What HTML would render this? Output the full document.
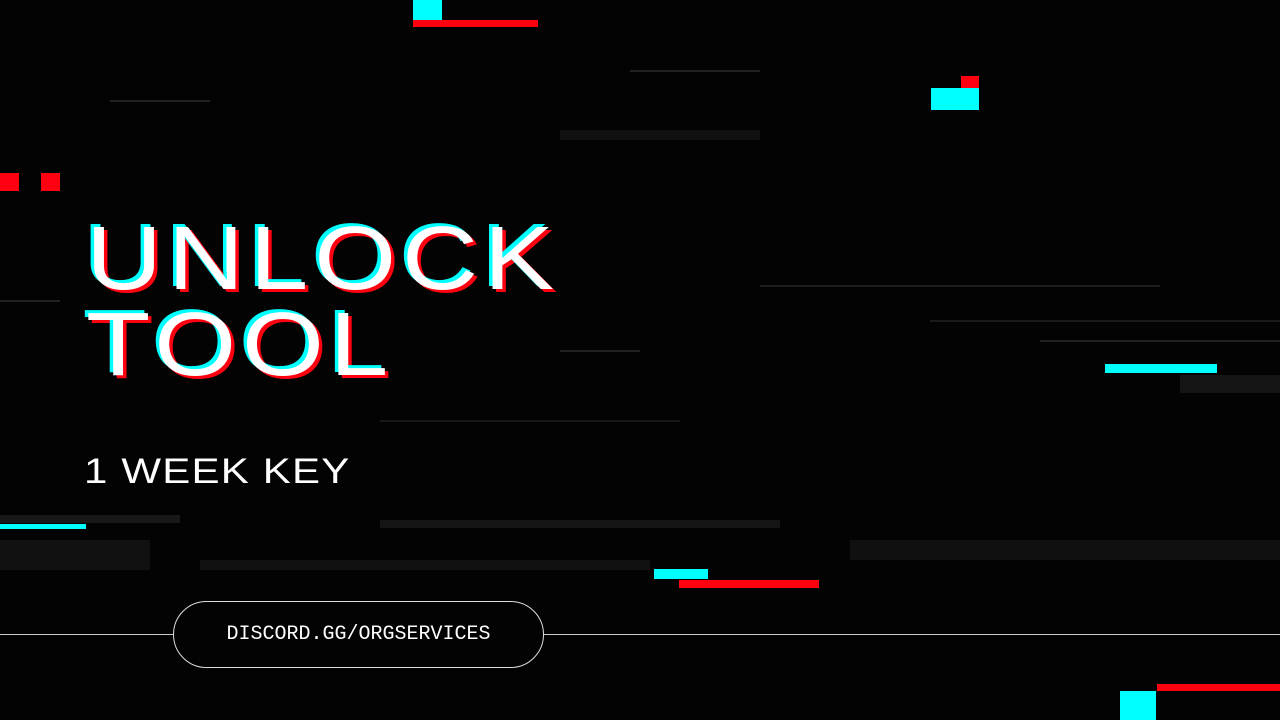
<!DOCTYPE html>
<html><head><style>
html,body{margin:0;padding:0}
body{width:1280px;height:720px;background:#030303;position:relative;overflow:hidden;font-family:"Liberation Sans",sans-serif}
.r{position:absolute}
.n{position:absolute;height:2px;background:#222}
.t{position:absolute;left:86px;color:#fff;font-size:90px;line-height:1;letter-spacing:5px;white-space:nowrap;transform-origin:0 0;transform:scaleX(1.17);text-shadow:-3px -3px 0 #00ffff,3px 3px 0 #ff0010}
</style></head><body>
<div class="n" style="left:760px;top:285px;width:400px;background:#1c1c1c"></div>
<div class="n" style="left:930px;top:320px;width:350px;background:#1a1a1a"></div>
<div class="n" style="left:1040px;top:340px;width:240px"></div>
<div class="n" style="left:1180px;top:375px;width:100px;height:18px;background:#141414"></div>
<div class="n" style="left:560px;top:350px;width:80px"></div>
<div class="n" style="left:380px;top:420px;width:300px;background:#181818"></div>
<div class="n" style="left:0;top:515px;width:180px;height:8px;background:#181818"></div>
<div class="n" style="left:0;top:540px;width:150px;height:30px;background:#111"></div>
<div class="n" style="left:380px;top:520px;width:400px;height:8px;background:#151515"></div>
<div class="n" style="left:200px;top:560px;width:450px;height:10px;background:#111"></div>
<div class="n" style="left:850px;top:540px;width:430px;height:20px;background:#101010"></div>
<div class="n" style="left:560px;top:130px;width:200px;height:10px;background:#101010"></div>
<div class="n" style="left:110px;top:100px;width:100px"></div>
<div class="n" style="left:630px;top:70px;width:130px"></div>
<div class="n" style="left:0;top:300px;width:60px"></div>

<div class="r" style="left:413px;top:0;width:29px;height:20px;background:#00ffff"></div>
<div class="r" style="left:413px;top:20px;width:125px;height:7px;background:#ff0010"></div>
<div class="r" style="left:961px;top:76px;width:18px;height:12px;background:#ff0010"></div>
<div class="r" style="left:931px;top:88px;width:48px;height:22px;background:#00ffff"></div>
<div class="r" style="left:0;top:173px;width:19px;height:18px;background:#ff0010"></div>
<div class="r" style="left:41px;top:173px;width:19px;height:18px;background:#ff0010"></div>
<div class="r" style="left:1105px;top:364px;width:112px;height:9px;background:#00ffff"></div>
<div class="r" style="left:0;top:524px;width:86px;height:5px;background:#00ffff"></div>
<div class="r" style="left:654px;top:569px;width:54px;height:10px;background:#00ffff"></div>
<div class="r" style="left:679px;top:580px;width:140px;height:8px;background:#ff0010"></div>
<div class="r" style="left:1157px;top:684px;width:123px;height:7px;background:#ff0010"></div>
<div class="r" style="left:1120px;top:691px;width:36px;height:29px;background:#00ffff"></div>

<div class="t" style="top:214px">UNLOCK</div>
<div class="t" style="top:300px">TOOL</div>
<div class="r" style="left:84px;top:454px;color:#fff;font-size:35px;line-height:1;letter-spacing:1px;transform-origin:0 0;transform:scaleX(1.2)">1 WEEK KEY</div>

<div class="r" style="left:0;top:634px;width:1280px;height:1px;background:#ccc"></div>
<div class="r" style="left:173px;top:601px;width:369px;height:65px;border:1px solid #ddd;border-radius:34px;background:#030303"></div>
<div class="r" style="left:173px;top:623px;width:371px;text-align:center;color:#fff;font-family:'Liberation Mono',monospace;font-size:20px;line-height:24px">DISCORD.GG/ORGSERVICES</div>
</body></html>
